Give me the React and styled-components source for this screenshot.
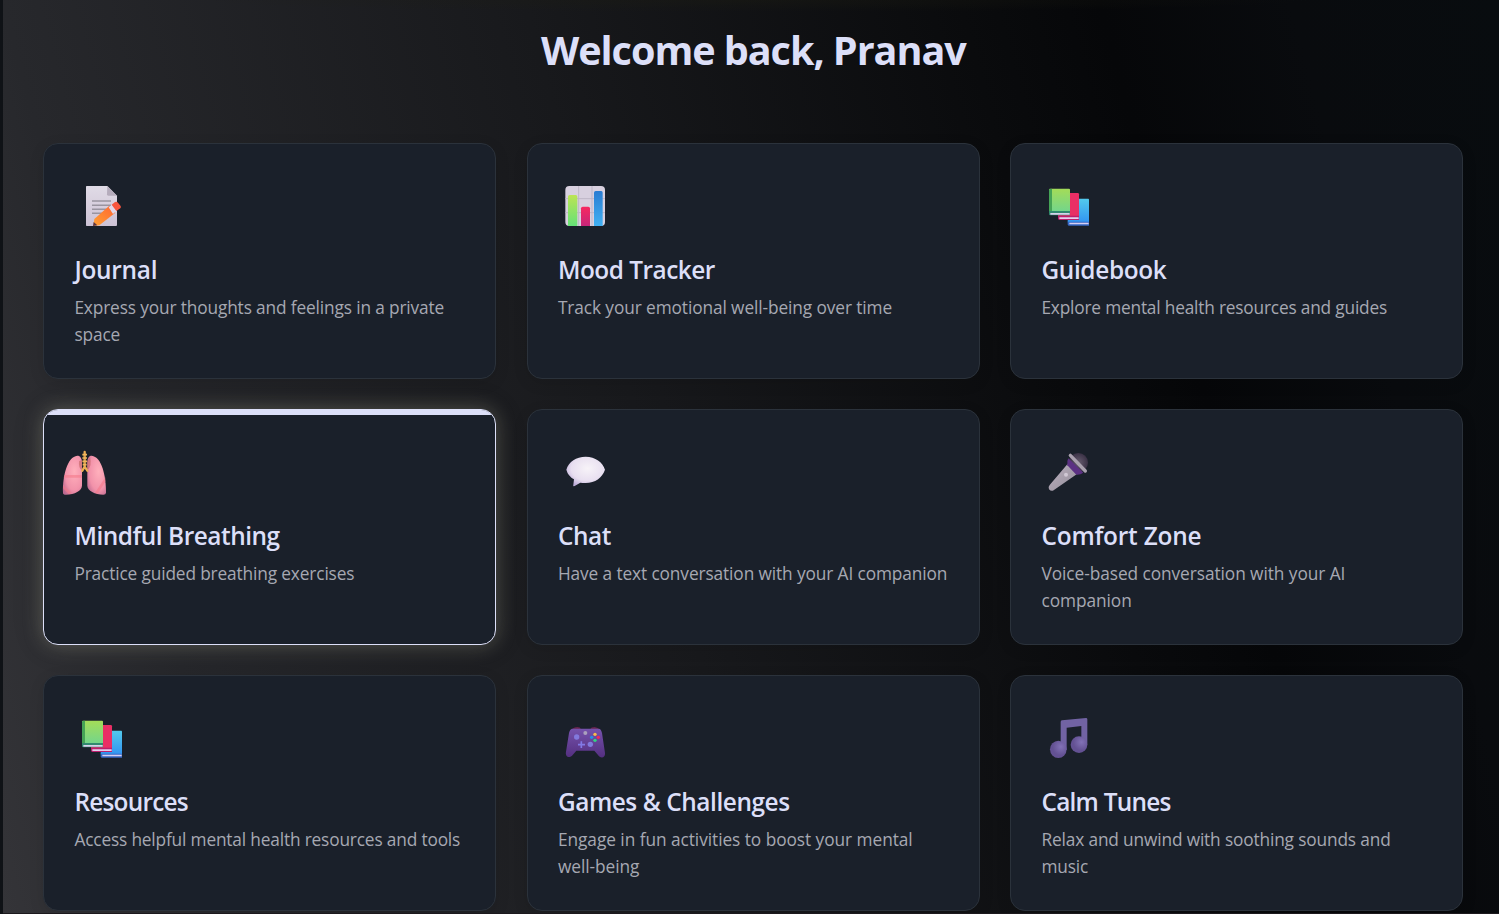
import React from "react";
import styled, { createGlobalStyle, css } from "styled-components";

const GlobalStyle = createGlobalStyle`
  *, *::before, *::after { box-sizing: border-box; }
  body {
    margin: 0;
    background: #0f1216;
    font-family: "Open Sans", "Noto Sans", sans-serif;
    overflow: hidden;
  }
`;

const Page = styled.main`
  height: 914px;
  margin-left: 3px;
  padding: 0 35.6px 0 40.4px;
  overflow: hidden;
  border-bottom: 1px solid #1c191d;
  background:
    radial-gradient(ellipse 560px 12px at 50% 0, rgba(30, 30, 18, 0.35), transparent),
    linear-gradient(75deg, #343438 0%, #27282c 14%, #18191c 44%, #0a0b0d 69%, #060709 77%, #090b0e 88%, #080c0f 100%);
`;

const Heading = styled.h1`
  margin: 0;
  height: 143px;
  padding-top: 22px;
  font-size: 39.6px;
  line-height: 56px;
  font-weight: 700;
  letter-spacing: -1.05px;
  text-align: center;
  color: #dcdff8;
`;

const Grid = styled.section`
  display: grid;
  grid-template-columns: repeat(3, 1fr);
  grid-auto-rows: 236px;
  gap: 30px 30.6px;
`;

const Card = styled.article`
  position: relative;
  padding: 0 29px 0 30px;
  border: 1px solid #2b323b;
  border-radius: 15px;
  background: #1a202a;
  overflow: hidden;
  box-shadow: 0 4px 15px rgba(0, 0, 0, 0.1);
  ${({ $active }) =>
    $active &&
    css`
      border-color: #dcdff8;
      box-shadow: 0 0 20px rgba(225, 225, 195, 0.28), 0 0 34px rgba(0, 0, 0, 0.12);
      &::before {
        content: "";
        position: absolute;
        inset: 0 0 auto;
        height: 5px;
        background: #dcdff8;
      }
    `}
`;

const IconSlot = styled.div`
  display: flex;
  align-items: center;
  height: 124px;
  margin-left: ${({ $shift }) => $shift}px;
  svg { display: block; overflow: visible; }
`;

const Title = styled.h2`
  margin: -14px 0 0;
  font-size: 24.4px;
  line-height: 32px;
  font-weight: 600;
  letter-spacing: ${({ $spacing }) => $spacing}px;
  color: #dcdff8;
`;

const Description = styled.p`
  margin: 8px 0 0;
  font-size: 17.3px;
  line-height: 27px;
  letter-spacing: ${({ $spacing }) => $spacing}px;
  color: #a6a8b2;
`;

function Glyph({ x, y, size = 40, children }) {
  return (
    <svg width={size} height={size} viewBox={`${x} ${y} ${size * 3} ${size * 3}`} aria-hidden="true">
      {children}
    </svg>
  );
}

function Gradient({ id, from, to, diagonal }) {
  return (
    <linearGradient id={id} x1="0" y1="0" x2={diagonal ? "1" : "0"} y2="1">
      <stop stopColor={from} />
      <stop offset="1" stopColor={to} />
    </linearGradient>
  );
}

function JournalIcon() {
  return (
    <Glyph x={36} y={48}>
      <defs>
        <Gradient id="paper" from="#e0dbe6" to="#cdc2d5" />
        <linearGradient id="pencil" x1="1" y1="0" x2="0" y2="1">
          <stop stopColor="#ff6533" />
          <stop offset="1" stopColor="#ffa032" />
        </linearGradient>
      </defs>
      <path d="M50 48H112L141 77V165Q141 168 138 168H50Q48 168 48 165V50Q48 48 50 48Z" fill="url(#paper)" />
      <path d="M112 48L141 77H115Q111 77 111 73Z" fill="#b5acbc" />
      <path d="M66 93H123M66 106H123M66 118H110M66 130H96" stroke="#9994a0" strokeWidth="4.5" />
      <path d="M73 147L118 107L136 128L88 166L70 168Z" fill="url(#pencil)" />
      <path d="M71 156L82 166L69 168Z" fill="#583344" />
      <path d="M116 112L126 104L140 122L129 132Z" fill="#e3d8e9" />
      <path d="M125 104L135 96Q140 93 144 98L152 108Q154 112 151 115L139 123Z" fill="#f8553e" />
    </Glyph>
  );
}

function ChartIcon() {
  return (
    <Glyph x={45} y={48}>
      <defs>
        <Gradient id="barGreen" from="#bce453" to="#65e178" />
        <Gradient id="barPink" from="#f72860" to="#c72679" />
        <Gradient id="barBlue" from="#2a7cd2" to="#41b1f3" />
      </defs>
      <rect x="46" y="48" width="119" height="120" rx="12" fill="#d8d0df" />
      <path d="M86 48V168M126 48V168M46 86H165M46 128H165" stroke="#beb6c7" strokeWidth="3" />
      <path d="M54 168V80Q54 75 59 75H77Q82 75 82 80V168H58Z" fill="url(#barGreen)" />
      <path d="M93 168V115Q93 110 98 110H115Q120 110 120 115V168Z" fill="url(#barPink)" />
      <path d="M132 168V68Q132 63 137 63H154Q158 63 158 68V168Z" fill="url(#barBlue)" />
    </Glyph>
  );
}

function BooksIcon() {
  return (
    <Glyph x={39} y={48}>
      <defs>
        <Gradient id="bookGreen" from="#a4dc58" to="#71d58d" />
        <Gradient id="bookBlue" from="#53caed" to="#3294f1" />
      </defs>
      <path d="M101 86H160Q162 86 162 89V157H98Z" fill="url(#bookBlue)" />
      <path d="M98 155H162V167H101Q97 167 98 160Z" fill="#3667c4" />
      <path d="M103 158H161V163H103Z" fill="#d6d0f2" />
      <path d="M71 69H128Q132 69 132 73V138H69V73Q69 69 71 69Z" fill="#e92f65" />
      <path d="M69 137H132V150H72Q68 149 69 142Z" fill="#bc1f6d" />
      <path d="M73 142H131V147H73Z" fill="#e4ceed" />
      <path d="M45 56H102Q105 56 105 59V127H42V60Q42 56 45 56Z" fill="url(#bookGreen)" />
      <path d="M42 59Q42 56 51 56V125H42Z" fill="#45a356" />
      <path d="M42 123H105V136H46Q41 136 42 128Z" fill="#31896f" />
      <path d="M46 129H104V134H46Z" fill="#d8d1eb" />
    </Glyph>
  );
}

function LungsIcon() {
  return (
    <Glyph x={39} y={43} size={44}>
      <defs>
        <radialGradient id="lung" cx=".6" cy=".4" r=".75">
          <stop stopColor="#ffb0bc" />
          <stop offset=".65" stopColor="#f292aa" />
          <stop offset="1" stopColor="#bd6990" />
        </radialGradient>
      </defs>
      <path d="M82 60C91 60 96 68 96 81V150C96 164 74 177 48 177Q39 177 39 171C38 120 52 63 82 60Z" fill="url(#lung)" />
      <path d="M125 60C116 60 112 68 112 81V150C112 164 135 177 160 177Q168 177 168 171C168 120 155 63 125 60Z" fill="url(#lung)" />
      <path d="M87 77Q85 98 96 104V72ZM120 65Q127 91 112 104V77Z" fill="#cc7071" opacity=".75" />
      <path d="M43 118H96V126H41ZM39 148L65 171L57 176L39 158ZM166 125V138L143 174L135 171Z" fill="#f5798b" opacity=".6" />
      <path d="M104 49V94M104 93L97 105M104 93L112 105" fill="none" stroke="#edae55" strokeWidth="7" strokeLinecap="round" />
      <path d="M97 57H111M97 67H111M97 77H111M98 87H110" stroke="#f0b65b" strokeWidth="5" />
      <path d="M102 62H106M102 72H106M102 82H106" stroke="#c28a45" strokeWidth="2" />
    </Glyph>
  );
}

function ChatIcon() {
  return (
    <Glyph x={45} y={51}>
      <defs>
        <radialGradient id="bubble" cx=".55" cy=".4" r=".65">
          <stop stopColor="#f7f3f8" />
          <stop offset=".65" stopColor="#e8dff0" />
          <stop offset="1" stopColor="#bba9d7" />
        </radialGradient>
      </defs>
      <path d="M49 104C57 79 78 66 107 65C136 66 158 81 165 104C156 129 136 143 107 144Q98 144 91 143L74 153Q68 155 70 149L72 133Q54 123 49 104Z" fill="url(#bubble)" />
    </Glyph>
  );
}

function MicIcon() {
  return (
    <Glyph x={39} y={51}>
      <defs>
        <Gradient id="micBody" from="#bbb0bf" to="#958e9a" diagonal />
        <radialGradient id="micHead">
          <stop stopColor="#685d70" />
          <stop offset="1" stopColor="#3a3145" />
        </radialGradient>
      </defs>
      <circle cx="130" cy="83" r="29" fill="url(#micHead)" />
      <path d="M97 88L125 118L57 165Q49 171 42 163Q38 157 44 150Z" fill="url(#micBody)" />
      <path d="M100 70L145 113Q136 120 124 119L97 91Q95 78 100 70Z" fill="#5c3183" />
      <path d="M106 61L151 108" stroke="#aaa1af" strokeWidth="10" strokeLinecap="round" />
      <circle cx="93" cy="119" r="6" fill="#d0c8d4" />
    </Glyph>
  );
}

function GamepadIcon() {
  return (
    <Glyph x={45} y={39}>
      <defs>
        <Gradient id="pad" from="#7552ac" to="#542f80" />
      </defs>
      <path d="M66 74Q70 66 82 66Q91 66 93 73ZM121 73Q123 66 134 66Q145 67 149 75Z" fill="#65244f" />
      <path d="M66 71H146Q153 71 156 84L165 144C167 160 150 161 144 150L133 137H79L68 150C58 162 45 155 48 140L57 84Q60 72 66 71Z" fill="url(#pad)" />
      <circle cx="80" cy="96" r="8" fill="#8279dc" />
      <circle cx="121" cy="118" r="8" fill="#8279dc" />
      <path d="M94 109V129M84 119H105" stroke="#8279e5" strokeWidth="5" />
      <circle cx="106" cy="84" r="6" fill="#aaa0bd" />
      <circle cx="135" cy="88" r="5" fill="#f9ba4b" />
      <circle cx="145" cy="97" r="5" fill="#ef275c" />
      <circle cx="125" cy="97" r="5" fill="#278de6" />
      <circle cx="135" cy="106" r="5" fill="#31d482" />
    </Glyph>
  );
}

function MusicIcon() {
  return (
    <Glyph x={39} y={39}>
      <defs>
        <radialGradient id="note" cx=".65" cy=".35">
          <stop stopColor="#8272b6" />
          <stop offset="1" stopColor="#635193" />
        </radialGradient>
      </defs>
      <path d="M77 51Q77 47 81 46L153 39Q157 39 157 43V119H139V63L95 68V134H77Z" fill="#7163a3" />
      <ellipse cx="70" cy="133" rx="25" ry="26" fill="url(#note)" />
      <ellipse cx="132" cy="119" rx="25" ry="25" fill="url(#note)" />
    </Glyph>
  );
}

const features = [
  { title: "Journal", text: "Express your thoughts and feelings in a private space", Icon: JournalIcon, shift: 8, titleSpacing: -0.25, textSpacing: -0.14 },
  { title: "Mood Tracker", text: "Track your emotional well-being over time", Icon: ChartIcon, shift: 7, titleSpacing: -0.5, textSpacing: -0.1 },
  { title: "Guidebook", text: "Explore mental health resources and guides", Icon: BooksIcon, shift: 7, titleSpacing: -0.36, textSpacing: -0.19 },
  { title: "Mindful Breathing", text: "Practice guided breathing exercises", Icon: LungsIcon, shift: -11, active: true, titleSpacing: -0.47, textSpacing: -0.14 },
  { title: "Chat", text: "Have a text conversation with your AI companion", Icon: ChatIcon, shift: 7, titleSpacing: -0.4, textSpacing: -0.11 },
  { title: "Comfort Zone", text: "Voice-based conversation with your AI companion", Icon: MicIcon, shift: 7, titleSpacing: -0.2, textSpacing: -0.065 },
  { title: "Resources", text: "Access helpful mental health resources and tools", Icon: BooksIcon, shift: 7, titleSpacing: -0.77, textSpacing: -0.165 },
  { title: "Games & Challenges", text: "Engage in fun activities to boost your mental well-being", Icon: GamepadIcon, shift: 7, titleSpacing: -0.43, textSpacing: -0.05 },
  { title: "Calm Tunes", text: "Relax and unwind with soothing sounds and music", Icon: MusicIcon, shift: 7, titleSpacing: -0.75, textSpacing: -0.15 },
];

export default function App() {
  return (
    <>
      <GlobalStyle />
      <Page>
        <Heading>Welcome back, Pranav</Heading>
        <Grid>
          {features.map(({ title, text, Icon, shift, active, titleSpacing, textSpacing }) => (
            <Card key={title} $active={active}>
              <IconSlot $shift={shift}><Icon /></IconSlot>
              <Title $spacing={titleSpacing}>{title}</Title>
              <Description $spacing={textSpacing}>{text}</Description>
            </Card>
          ))}
        </Grid>
      </Page>
    </>
  );
}
